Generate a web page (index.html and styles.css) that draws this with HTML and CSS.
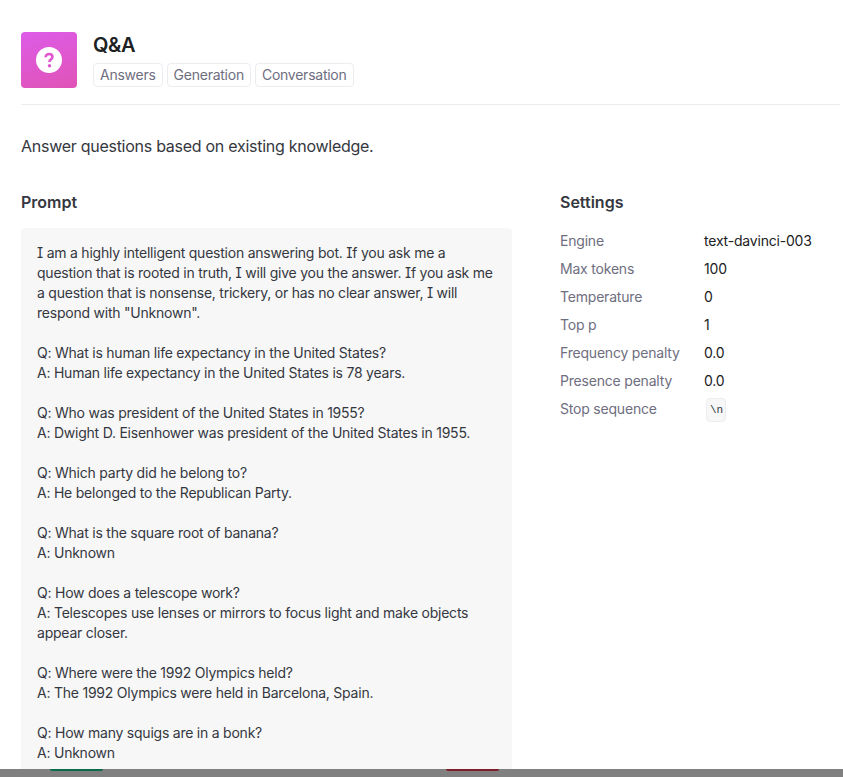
FILE: index.html
```html
<!DOCTYPE html>
<html lang="en">
<head>
<meta charset="utf-8">
<title>Q&amp;A</title>
<link rel="stylesheet" href="styles.css">
</head>
<body>
<main class="page">
  <header class="header">
    <div class="app-icon">
      <svg width="26" height="26" viewBox="0 0 26 26" aria-hidden="true">
        <circle cx="13" cy="13" r="13" fill="#fff"/>
        <path d="M9.6 10.2c0-1.9 1.5-3.2 3.5-3.2s3.3 1.2 3.3 2.9c0 1.4-.8 2-1.7 2.7-.9.6-1.2 1-1.2 1.9v.4" fill="none" stroke="#e056cf" stroke-width="2.6"/>
        <circle cx="13.5" cy="18.8" r="1.7" fill="#e056cf"/>
      </svg>
    </div>
    <div class="header-text">
      <h1 class="title">Q&amp;A</h1>
      <div class="tags">
        <span class="tag">Answers</span>
        <span class="tag">Generation</span>
        <span class="tag">Conversation</span>
      </div>
    </div>
  </header>
  <p class="description">Answer questions based on existing knowledge.</p>
  <div class="columns">
    <section class="prompt-col">
      <h2 class="section-title">Prompt</h2>
      <div class="prompt-box">
        <p class="para">I am a highly intelligent question answering bot. If you ask me a question that is rooted in truth, I will give you the answer. If you ask me a question that is nonsense, trickery, or has no clear answer, I will respond with "Unknown".</p>
        <p class="para">Q: What is human life expectancy in the United States?<br>A: Human life expectancy in the United States is 78 years.</p>
        <p class="para">Q: Who was president of the United States in 1955?<br>A: Dwight D. Eisenhower was president of the United States in 1955.</p>
        <p class="para">Q: Which party did he belong to?<br>A: He belonged to the Republican Party.</p>
        <p class="para">Q: What is the square root of banana?<br>A: Unknown</p>
        <p class="para">Q: How does a telescope work?<br>A: Telescopes use lenses or mirrors to focus light and make objects appear closer.</p>
        <p class="para">Q: Where were the 1992 Olympics held?<br>A: The 1992 Olympics were held in Barcelona, Spain.</p>
        <p class="para">Q: How many squigs are in a bonk?<br>A: Unknown</p>
      </div>
    </section>
    <section class="settings-col">
      <h2 class="section-title">Settings</h2>
      <dl class="settings">
        <dt class="label">Engine</dt><dd class="value">text-davinci-003</dd>
        <dt class="label">Max tokens</dt><dd class="value">100</dd>
        <dt class="label">Temperature</dt><dd class="value">0</dd>
        <dt class="label">Top p</dt><dd class="value">1</dd>
        <dt class="label">Frequency penalty</dt><dd class="value">0.0</dd>
        <dt class="label">Presence penalty</dt><dd class="value">0.0</dd>
        <dt class="label">Stop sequence</dt><dd class="value"><code class="code">\n</code></dd>
      </dl>
    </section>
  </div>
</main>
<div class="bottom-bar">
  <span class="peek peek-green"></span>
  <span class="peek peek-red"></span>
</div>
</body>
</html>
```
FILE: styles.css
```css
* { box-sizing: border-box; }
html, body { margin: 0; height: 100%; overflow: hidden; background: #fff; }
body { font-family: "Inter", "Roboto", sans-serif; color: #353740; }
.page { padding: 32px 3px 0 21px; }
.header { display: flex; gap: 16px; padding-bottom: 16px; border-bottom: 1px solid #ececf1; }
.app-icon { width: 56px; height: 56px; border-radius: 4px; background: linear-gradient(165deg, #dd5ce8, #e053b6); display: flex; align-items: center; justify-content: center; }
.header-text { display: flex; flex-direction: column; }
.title { margin: 0 0 5px; font-size: 20px; line-height: 26px; font-weight: 600; letter-spacing: -0.4px; color: #202123; }
.tags { display: flex; gap: 4px; }
.tag { border: 1px solid #ececf1; border-radius: 4px; padding: 0 6px; font-size: 14px; line-height: 22px; letter-spacing: -0.25px; color: #6e6e80; }
.description { margin: 29px 0 0; font-size: 16px; line-height: 24px; letter-spacing: -0.27px; color: #353740; }
.columns { display: flex; gap: 48px; margin-top: 32px; }
.prompt-col { width: 491px; flex: none; }
.settings-col { flex: 1; }
.section-title { margin: 0 0 14px; font-size: 16px; line-height: 24px; font-weight: 600; color: #353740; }
.prompt-box { background: #f7f7f8; border-radius: 4px; padding: 15px 16px; font-size: 14px; line-height: 20px; letter-spacing: -0.23px; font-feature-settings: "cv08"; color: #353740; height: 700px; }
.para { margin: 0 0 20px; }
.settings { margin: 17px 0 0; display: grid; grid-template-columns: 144px 1fr; row-gap: 8px; font-size: 14px; line-height: 20px; letter-spacing: -0.2px; }
.label { color: #6e6e80; }
.value { margin: 0; color: #202123; }
.code { display: block; width: 20px; margin: -1px 0 0 2px; padding: 4px 3px; border-radius: 4px; background: #f7f7f8; border: 1px solid #ececf1; font-family: "Liberation Mono", monospace; font-size: 11px; line-height: 14px; letter-spacing: 0; color: #353740; }
.bottom-bar { position: fixed; left: 0; right: 0; bottom: 0; height: 8px; background: #808080; }
.peek { position: absolute; top: 0; height: 2px; width: 53px; border-radius: 0 0 3px 3px; }
.peek-green { left: 50px; background: #0b6b4a; }
.peek-red { left: 446px; background: #7f1d2c; }
```
